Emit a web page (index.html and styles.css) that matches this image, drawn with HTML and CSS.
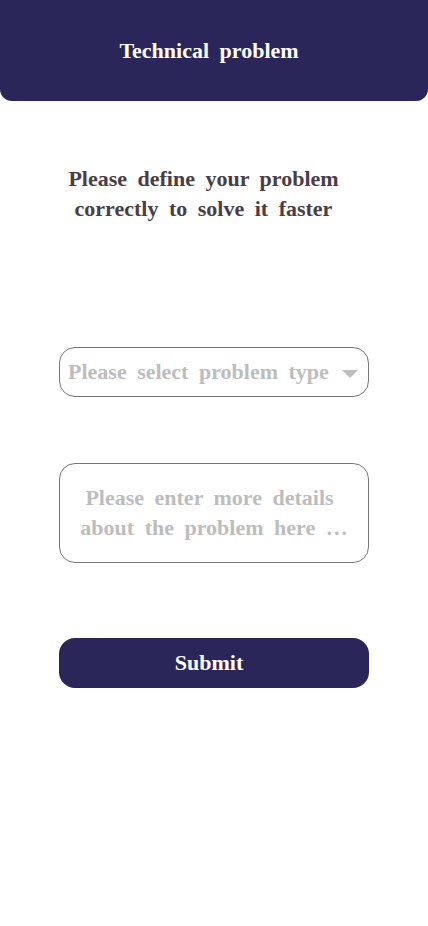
FILE: index.html
```html
<!DOCTYPE html>
<html>
<head>
<meta charset="utf-8">
<link rel="stylesheet" href="styles.css">
</head>
<body>
<header class="topbar">
  <h1 class="title">Technical problem</h1>
</header>
<main class="content">
  <p class="intro">Please define your problem<br>correctly to solve it faster</p>
  <div class="select">
    <span class="select-text">Please select problem type</span>
    <svg class="caret" width="16" height="8" viewBox="0 0 16 8"><path d="M0 0 L16 0 L8 8 Z" fill="#bdbdbd"/></svg>
  </div>
  <div class="details">
    <span class="line line-first">Please enter more details</span>
    <span class="line">about the problem here …</span>
  </div>
  <button class="submit">Submit</button>
</main>
</body>
</html>
```
FILE: styles.css
```css
* { box-sizing: border-box; }
html, body { margin: 0; padding: 0; background: #fff; }
body {
  font-family: "Liberation Serif", "Times New Roman", serif;
  font-weight: bold;
  font-size: 22px;
  word-spacing: 5px;
}
.topbar {
  height: 101px;
  background: #2b2659;
  border-radius: 0 0 12px 12px;
  display: flex;
  align-items: center;
  justify-content: center;
}
.title {
  margin: 0;
  padding-right: 10px;
  color: #fff;
  font-size: 22px;
  font-weight: bold;
}
.content {
  display: flex;
  flex-direction: column;
  align-items: center;
  padding-top: 63px;
}
.intro {
  margin: 0;
  padding-right: 21px;
  color: #4b3d44;
  line-height: 30px;
  text-align: center;
}
.select {
  margin-top: 123px;
  width: 310px;
  height: 50px;
  border: 1px solid #777;
  border-radius: 16px;
  display: flex;
  align-items: center;
  justify-content: space-between;
  padding: 0 10px 0 8px;
  color: #bdbdbd;
}
.caret { margin-top: 3px; }
.details {
  margin-top: 66px;
  width: 310px;
  height: 100px;
  border: 1px solid #777;
  border-radius: 16px;
  display: flex;
  flex-direction: column;
  align-items: center;
  justify-content: center;
  text-align: center;
  line-height: 30px;
  color: #bdbdbd;
}
.line { display: block; }
.line-first { padding-right: 9px; }
.submit {
  margin-top: 75px;
  width: 310px;
  height: 50px;
  border: none;
  border-radius: 16px;
  background: #2b2659;
  color: #fff;
  font-family: inherit;
  font-weight: bold;
  font-size: 22px;
  word-spacing: 5px;
  padding: 0 10px 0 0;
}
```
